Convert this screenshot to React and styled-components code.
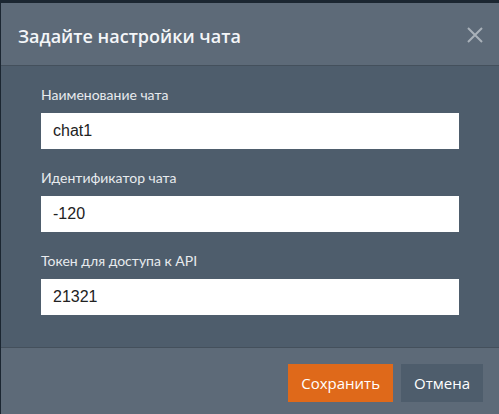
import styled, { createGlobalStyle } from 'styled-components';

const Global = createGlobalStyle`
  html, body {
    margin: 0;
    padding: 0;
    background: #1b2631;
    overflow: hidden;
  }
`

const Modal = styled.div`
  width: 498px;
  margin: 3px 0 0 1px;
  background: #4e5d6c;
  font-family: 'Lato', 'Open Sans', sans-serif;
`
const Header = styled.div`
  display: flex;
  align-items: center;
  justify-content: space-between;
  height: 62px;
  padding: 0 16px 0 17px;
  background: #5d6a78;
  border-bottom: 1px solid #44505c;
  box-sizing: border-box;
  height: 63px;
`
const Title = styled.div`
  font-family: 'Open Sans', sans-serif;
  font-weight: 600;
  font-size: 18px;
  color: #f4f6f8;
  padding-top: 3px;
`
const Close = styled.button`
  width: 16px;
  height: 16px;
  padding: 0;
  border: none;
  background: none;
  display: block;
  margin-top: 2px;
`
const Body = styled.div`
  padding: 19px 40px 32px;
`
const Group = styled.div`
  display: flex;
  flex-direction: column;
  gap: 8px;
  margin-bottom: 19px;
  &:last-child {
    margin-bottom: 0;
  }
`
const Label = styled.label`
  font-size: 14px;
  line-height: 20px;
  color: #e8ebee;
`
const Input = styled.input`
  height: 36px;
  box-sizing: border-box;
  border: none;
  outline: none;
  padding: 0 12px;
  background: #fff;
  font-family: 'Liberation Sans', Arial, sans-serif;
  font-size: 16px;
  color: #222;
`
const Footer = styled.div`
  display: flex;
  justify-content: flex-end;
  gap: 8px;
  padding: 16px 16px 20px;
  background: #5d6a78;
  border-top: 1px solid #44505c;
`
const Button = styled.button`
  height: 38px;
  padding: 0 ${p => p.$primary ? 13 : 13}px;
  border: none;
  background: ${p => p.$primary ? '#df691a' : '#4e5d6c'};
  color: #fff;
  font-family: 'Open Sans', sans-serif;
  font-size: 15px;
`

export default function App() {
  return (
    <>
      <Global />
      <Modal>
        <Header>
          <Title>Задайте настройки чата</Title>
          <Close aria-label="close">
            <svg width="16" height="16" viewBox="0 0 16 16">
              <path d="M1 1L15 15M15 1L1 15" stroke="#a9b1b9" strokeWidth="2" />
            </svg>
          </Close>
        </Header>
        <Body>
          <Group>
            <Label>Наименование чата</Label>
            <Input defaultValue="chat1" />
          </Group>
          <Group>
            <Label>Идентификатор чата</Label>
            <Input defaultValue="-120" />
          </Group>
          <Group>
            <Label>Токен для доступа к API</Label>
            <Input defaultValue="21321" />
          </Group>
        </Body>
        <Footer>
          <Button $primary>Сохранить</Button>
          <Button>Отмена</Button>
        </Footer>
      </Modal>
    </>
  )
}
